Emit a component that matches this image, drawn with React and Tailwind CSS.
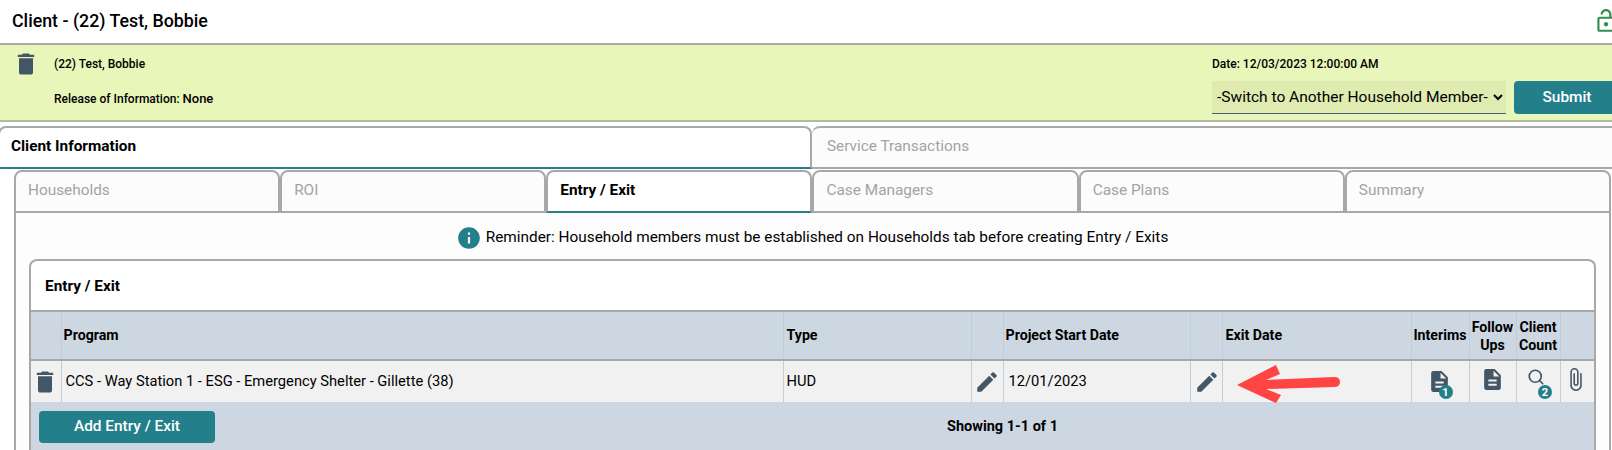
import React from 'react';
import { MdDelete, MdEdit, MdDescription, MdAttachFile, MdInfo, MdOutlineLockOpen } from 'react-icons/md';
import { Search } from 'lucide-react';

const subTabs = ['Households', 'ROI', 'Entry / Exit', 'Case Managers', 'Case Plans', 'Summary'];

const Badge = ({ n, className }) => (
  <span className={`absolute flex h-[14px] w-[14px] items-center justify-center rounded-full bg-[#23808a] text-[11px] font-bold leading-none text-white ${className}`}>{n}</span>
);

const App = () => {
  return (
    <div className="h-[450px] w-[1612px] overflow-hidden bg-white font-['Roboto',sans-serif] text-black">
      {/* page title */}
      <div className="flex h-[43px] items-center justify-between pl-3">
        <h1 className="text-[17.8px] font-medium">Client - (22) Test, Bobbie</h1>
        <MdOutlineLockOpen className="mb-[2px] mr-[-7px] text-[26px] text-[#2f9150]" />
      </div>

      {/* client banner */}
      <div className="flex h-[79px] border-y-2 border-t-[#a8a8a8] border-b-[#b5b9a0] bg-[#e9f6b9]">
        <MdDelete className="ml-[12px] mt-[5px] text-[28px] text-[#425666]" />
        <div className="ml-[14px] pt-[10px] text-[12px] font-medium">
          <div className="h-[34px]">(22) Test, Bobbie</div>
          <div>Release of Information: <span className="text-[13px]">None</span></div>
        </div>
        <div className="ml-auto w-[400px] shrink-0 pt-[10px]">
          <div className="text-[12px] font-medium">Date: 12/03/2023 12:00:00 AM</div>
          <div className="mt-[8px] flex gap-2">
            <select className="h-[33px] w-[294px] shrink-0 border-b border-[#4a6078] bg-[#dfebb0] pl-[1px] text-[15.5px]">
              <option>-Switch to Another Household Member-</option>
            </select>
            <button className="h-[33px] w-[106px] shrink-0 rounded-l-[4px] bg-[#23808a] text-[15.4px] font-medium text-white">Submit</button>
          </div>
        </div>
      </div>

      {/* top tabs */}
      <div className="mt-[4px] flex h-[43px] text-[15.36px]">
        <div className="ml-[-2px] flex w-[814px] items-center rounded-t-[8px] border-2 border-[#a8a8a8] border-b-[#23808a] pb-[2px] pl-[11px] font-bold">Client Information</div>
        <div className="mr-[-10px] flex flex-1 items-center rounded-t-[8px] border-2 border-l-0 border-[#a8a8a8] bg-[#fcfcfc] pb-[2px] pl-[15px] text-[#a3a3a3]">Service Transactions</div>
      </div>

      {/* sub tabs */}
      <div className="ml-[14px] mr-[1px] mt-[1px] grid h-[43px] grid-cols-6 text-[15.36px]">
        {subTabs.map((t) => (
          t === 'Entry / Exit' ? (
            <div key={t} className="flex items-center rounded-t-[8px] border-2 border-[#a8a8a8] border-b-[#23808a] pb-[2px] pl-[12px] font-bold">{t}</div>
          ) : (
            <div key={t} className="flex items-center rounded-t-[8px] border-2 border-[#a8a8a8] bg-[#fcfcfc] pb-[2px] pl-[12px] text-[#a3a3a3]">{t}</div>
          )
        ))}
      </div>

      {/* tab panel */}
      <div className="ml-[14px] mr-[1px] border-x-2 border-[#a8a8a8] bg-[#fdfdfd] pl-[13px] pr-[13px]">
        <div className="flex h-[46px] items-center justify-center pr-[1px] pt-[3px] text-[15.36px]">
          <MdInfo className="mr-[4px] text-[26px] text-[#23808a]" />
          <span>Reminder: Household members must be established on Households tab before creating Entry / Exits</span>
        </div>

        <div className="rounded-t-[8px] border-x-2 border-t-2 border-[#a8a8a8] bg-white">
          <div className="flex h-[49px] items-center pl-[14px] pt-[3px] text-[15.36px] font-bold">Entry / Exit</div>
          <table className="w-full table-fixed border-t-2 border-[#a8a8a8] text-[14.7px]">
            <colgroup>
              <col className="w-[30px]" />
              <col className="w-[722px]" />
              <col className="w-[188px]" />
              <col className="w-[32px]" />
              <col className="w-[187px]" />
              <col className="w-[32px]" />
              <col className="w-[189px]" />
              <col className="w-[58px]" />
              <col className="w-[47px]" />
              <col className="w-[44px]" />
              <col />
            </colgroup>
            <thead className="bg-[#cdd7e1] text-[14.2px]">
              <tr className="h-[49px] border-b-2 border-[#a8a8a8]">
                <th className="border-r border-[#c0ced9]"></th>
                <th className="border-r border-[#c0ced9] pl-[2px] pt-[1px] text-left font-bold">Program</th>
                <th className="border-r border-[#c0ced9] pl-[3px] pt-[1px] text-left font-bold">Type</th>
                <th className="border-r border-[#c0ced9]"></th>
                <th className="border-r border-[#c0ced9] pl-[2px] pt-[1px] text-left font-bold">Project Start Date</th>
                <th className="border-r border-[#c0ced9]"></th>
                <th className="border-r border-[#c0ced9] pl-[3px] pt-[1px] text-left font-bold">Exit Date</th>
                <th className="border-r border-[#c0ced9] pt-[1px] text-center font-bold">Interims</th>
                <th className="border-r border-[#c0ced9] pt-[1px] text-center font-bold leading-[18px]">Follow Ups</th>
                <th className="border-r border-[#c0ced9] pt-[1px] text-center font-bold leading-[18px]">Client Count</th>
                <th></th>
              </tr>
            </thead>
            <tbody className="bg-[#f1f1f1]">
              <tr className="h-[42px]">
                <td className="border-r border-[#c0ced9]"><MdDelete className="text-[28px] text-[#425666]" /></td>
                <td className="border-r border-[#c0ced9] pl-[4px]">CCS - Way Station 1 - ESG - Emergency Shelter - Gillette (38)</td>
                <td className="border-r border-[#c0ced9] pl-[3px]">HUD</td>
                <td className="border-r border-[#c0ced9]"><MdEdit className="ml-[2px] text-[26px] text-[#425666]" /></td>
                <td className="border-r border-[#c0ced9] pl-[5px]">12/01/2023</td>
                <td className="border-r border-[#c0ced9]"><MdEdit className="ml-[3px] text-[26px] text-[#425666]" /></td>
                <td className="relative border-r border-[#c0ced9]">
                  {/* hand drawn annotation arrow */}
                  <svg width="104" height="39" viewBox="0 0 104 39" className="absolute left-[14px] top-[4px]">
                    <path d="M0 20 L39 0 L43 9 L29 15 L97 12 Q103 12 103 17 Q103 22 97 22 L29 24 L44 30 L39 38 Z" fill="#ff4444" />
                  </svg>
                </td>
                <td className="border-r border-[#c0ced9]">
                  <span className="relative left-[-1px] mx-auto block h-[25px] w-[25px]">
                    <MdDescription className="mb-[4px] text-[25px] text-[#425666]" />
                    <Badge n="1" className="left-[12px] top-[16px]" />
                  </span>
                </td>
                <td className="border-r border-[#c0ced9]"><MdDescription className="mx-auto mb-[4px] text-[25px] text-[#425666]" /></td>
                <td className="border-r border-[#c0ced9]">
                  <span className="relative mx-auto block h-[25px] w-[30px]">
                    <Search size={18} strokeWidth={2.3} className="absolute left-[4px] top-[-1px] text-[#425666]" />
                    <Badge n="2" className="left-[15px] top-[16px]" />
                  </span>
                </td>
                <td><MdAttachFile className="ml-[2px] mb-[5px] text-[25px] text-[#425666]" /></td>
              </tr>
            </tbody>
          </table>
          <div className="flex h-[60px] items-start bg-[#cdd7e1] pl-[8px] pt-[9px] text-[14.5px]">
            <button className="h-[32px] w-[176px] rounded-[4px] bg-[#23808a] text-[15.4px] font-medium text-white">Add Entry / Exit</button>
            <span className="ml-[732px] pt-[5px] font-bold">Showing 1-1 of 1</span>
          </div>
        </div>
      </div>
    </div>
  );
};

export default App;
